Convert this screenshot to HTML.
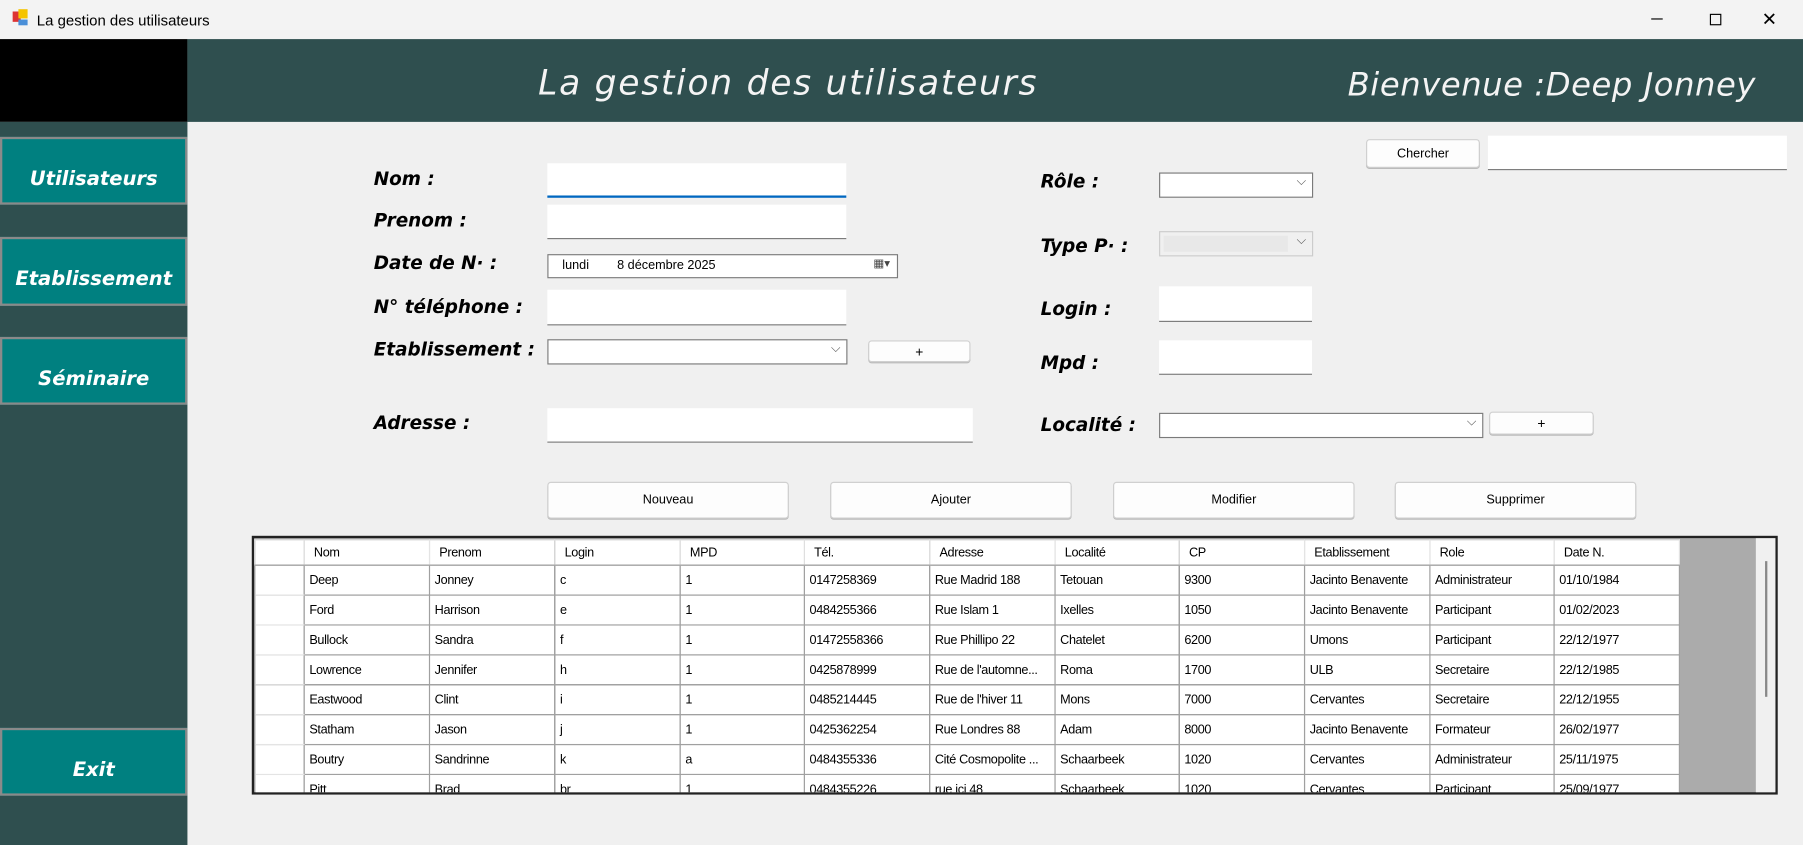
<!DOCTYPE html>
<html><head><meta charset="utf-8">
<style>
html,body{margin:0;padding:0;width:1803px;height:845px;overflow:hidden;background:#f0f0f0}
#w{position:absolute;left:0;top:0;width:1568px;height:735px;transform:scale(1.14987);transform-origin:0 0;font-family:"Liberation Sans",sans-serif;font-size:12px;color:#000;background:#f0f0f0}
.a{position:absolute;box-sizing:border-box}
.cur{font-family:"DejaVu Sans","Liberation Sans",sans-serif;font-style:italic;font-weight:bold}
.lbl{position:absolute;font-family:"DejaVu Sans","Liberation Sans",sans-serif;font-style:italic;font-weight:bold;font-size:16px;color:#000}
.sb{position:absolute;left:0;width:163px;background:#008080;border:2px solid #8a8a8a;color:#fff;font-size:17px;display:flex;align-items:center;justify-content:center;box-sizing:border-box;padding-top:14px}
.tb{position:absolute;background:#fff;border-bottom:1px solid #7a7a7a;box-sizing:border-box}
.cb{position:absolute;background:#fff;border:1px solid #7a7a7a;box-sizing:border-box}
.cb:after{content:"⌵";position:absolute;right:5px;top:1px;font-size:11px;color:#555}
.bt{position:absolute;background:#fdfdfd;border:1px solid #d0d0d0;border-radius:3px;box-sizing:border-box;display:flex;align-items:center;justify-content:center;font-size:12px;box-shadow:0 1px 0 #bbb}
table{border-collapse:collapse;table-layout:fixed}
td{height:26px;padding:0 0 0 4px;border:1px solid #a0a0a0;background:#fff;white-space:nowrap;overflow:hidden;font-size:11px;letter-spacing:-0.3px;box-sizing:border-box}
tr.h td{height:22px;padding-left:8px;border-color:#e4e4e4;border-bottom:1px solid #a0a0a0}
td.r{border-left:none;border-top-color:#e4e4e4;border-bottom-color:#e4e4e4}
</style></head><body><div id="w">
<div class="a" style="left:0;top:0;width:1568px;height:34px;background:#f3f3f3"></div>
<div class="a" style="left:11px;top:10px;width:7px;height:9px;background:#d33"></div>
<div class="a" style="left:16px;top:8px;width:8px;height:8px;background:#f5c400"></div>
<div class="a" style="left:16px;top:17px;width:8px;height:5px;background:#4a8fd8"></div>
<div class="a" style="left:32px;top:10px;font-size:13px">La gestion des utilisateurs</div>
<div class="a" style="left:1436px;top:16px;width:10px;height:1px;background:#000"></div>
<div class="a" style="left:1487px;top:12px;width:10px;height:10px;border:1px solid #000"></div>
<div class="a" style="left:1532px;top:7px;font-size:16px">✕</div>

<div class="a" style="left:0;top:34px;width:163px;height:72px;background:#000"></div>
<div class="a" style="left:0;top:106px;width:163px;height:629px;background:#2f4f4f"></div>
<div class="a" style="left:163px;top:34px;width:1405px;height:72px;background:#2f4f4f"></div>
<div class="a cur" style="left:468px;top:55px;font-size:30px;letter-spacing:1.5px;color:#f4f4f4;font-weight:normal">La gestion des utilisateurs</div>
<div class="a cur" style="left:1172px;top:57px;font-size:28px;letter-spacing:0.5px;color:#f4f4f4;font-weight:normal">Bienvenue :Deep Jonney</div>

<div class="sb cur" style="top:119px;height:59px">Utilisateurs</div>
<div class="sb cur" style="top:206px;height:60px">Etablissement</div>
<div class="sb cur" style="top:293px;height:59px">Séminaire</div>
<div class="sb cur" style="top:633px;height:59px">Exit</div>

<div class="lbl" style="left:325px;top:146px">Nom :</div>
<div class="lbl" style="left:325px;top:182px">Prenom :</div>
<div class="lbl" style="left:325px;top:219px">Date de N· :</div>
<div class="lbl" style="left:325px;top:257px">N° téléphone :</div>
<div class="lbl" style="left:325px;top:294px">Etablissement :</div>
<div class="lbl" style="left:325px;top:358px">Adresse :</div>
<div class="lbl" style="left:905px;top:148px">Rôle :</div>
<div class="lbl" style="left:905px;top:204px">Type P· :</div>
<div class="lbl" style="left:905px;top:259px">Login :</div>
<div class="lbl" style="left:905px;top:306px">Mpd :</div>
<div class="lbl" style="left:905px;top:360px">Localité :</div>

<div class="tb" style="left:476px;top:142px;width:260px;height:30px;border-bottom:2px solid #0067c0"></div>
<div class="tb" style="left:476px;top:178px;width:260px;height:30px"></div>
<div class="a" style="left:476px;top:221px;width:305px;height:21px;background:#fff;border:1px solid #7a7a7a;font-size:11px"><span style="position:absolute;left:12px;top:3px">lundi&nbsp;&nbsp;&nbsp;&nbsp;&nbsp;&nbsp;&nbsp; 8 décembre 2025</span><span style="position:absolute;right:6px;top:2px;font-size:10px;color:#444">▦▾</span></div>
<div class="tb" style="left:476px;top:252px;width:260px;height:31px"></div>
<div class="cb" style="left:476px;top:295px;width:261px;height:22px"></div>
<div class="bt" style="left:755px;top:296px;width:89px;height:19px">+</div>
<div class="tb" style="left:476px;top:355px;width:370px;height:30px"></div>

<div class="cb" style="left:1008px;top:150px;width:134px;height:22px"></div>
<div class="cb" style="left:1008px;top:201px;width:134px;height:22px;background:#f0f0f0;border-color:#ccc"><div class="a" style="left:3px;top:3px;width:108px;height:14px;background:#e8e8e8"></div></div>
<div class="tb" style="left:1008px;top:249px;width:133px;height:31px"></div>
<div class="tb" style="left:1008px;top:296px;width:133px;height:30px"></div>
<div class="cb" style="left:1008px;top:359px;width:282px;height:22px"></div>
<div class="bt" style="left:1295px;top:358px;width:91px;height:20px">+</div>

<div class="bt" style="left:1188px;top:121px;width:99px;height:25px;font-size:11px">Chercher</div>
<div class="tb" style="left:1294px;top:118px;width:260px;height:30px"></div>

<div class="bt" style="left:476px;top:419px;width:210px;height:32px;font-size:11px">Nouveau</div>
<div class="bt" style="left:722px;top:419px;width:210px;height:32px;font-size:11px">Ajouter</div>
<div class="bt" style="left:968px;top:419px;width:210px;height:32px;font-size:11px">Modifier</div>
<div class="bt" style="left:1213px;top:419px;width:210px;height:32px;font-size:11px">Supprimer</div>

<div class="a" style="left:219px;top:466px;width:1327px;height:225px;border:2px solid #222;background:#ababab;overflow:hidden">
<div class="a" style="left:1306px;top:0;width:19px;height:223px;background:#f0f0f0"></div>
<div class="a" style="left:1314px;top:20px;width:2px;height:118px;background:#888"></div>
<table style="width:1239px;position:absolute;left:0;top:1px">
<colgroup><col style="width:43px"><col style="width:109px"><col style="width:109px"><col style="width:109px"><col style="width:108px"><col style="width:109px"><col style="width:109px"><col style="width:108px"><col style="width:109px"><col style="width:109px"><col style="width:108px"><col style="width:109px"></colgroup>
<tr class="h"><td></td><td>Nom</td><td>Prenom</td><td>Login</td><td>MPD</td><td>Tél.</td><td>Adresse</td><td>Localité</td><td>CP</td><td>Etablissement</td><td>Role</td><td>Date N.</td></tr>
<tr><td class="r"></td><td>Deep</td><td>Jonney</td><td>c</td><td>1</td><td>0147258369</td><td>Rue Madrid 188</td><td>Tetouan</td><td>9300</td><td>Jacinto Benavente</td><td>Administrateur</td><td>01/10/1984</td></tr>
<tr><td class="r"></td><td>Ford</td><td>Harrison</td><td>e</td><td>1</td><td>0484255366</td><td>Rue Islam 1</td><td>Ixelles</td><td>1050</td><td>Jacinto Benavente</td><td>Participant</td><td>01/02/2023</td></tr>
<tr><td class="r"></td><td>Bullock</td><td>Sandra</td><td>f</td><td>1</td><td>01472558366</td><td>Rue Phillipo 22</td><td>Chatelet</td><td>6200</td><td>Umons</td><td>Participant</td><td>22/12/1977</td></tr>
<tr><td class="r"></td><td>Lowrence</td><td>Jennifer</td><td>h</td><td>1</td><td>0425878999</td><td>Rue de l'automne...</td><td>Roma</td><td>1700</td><td>ULB</td><td>Secretaire</td><td>22/12/1985</td></tr>
<tr><td class="r"></td><td>Eastwood</td><td>Clint</td><td>i</td><td>1</td><td>0485214445</td><td>Rue de l'hiver 11</td><td>Mons</td><td>7000</td><td>Cervantes</td><td>Secretaire</td><td>22/12/1955</td></tr>
<tr><td class="r"></td><td>Statham</td><td>Jason</td><td>j</td><td>1</td><td>0425362254</td><td>Rue Londres 88</td><td>Adam</td><td>8000</td><td>Jacinto Benavente</td><td>Formateur</td><td>26/02/1977</td></tr>
<tr><td class="r"></td><td>Boutry</td><td>Sandrinne</td><td>k</td><td>a</td><td>0484355336</td><td>Cité Cosmopolite ...</td><td>Schaarbeek</td><td>1020</td><td>Cervantes</td><td>Administrateur</td><td>25/11/1975</td></tr>
<tr><td class="r"></td><td>Pitt</td><td>Brad</td><td>br</td><td>1</td><td>0484355226</td><td>rue ici 48</td><td>Schaarbeek</td><td>1020</td><td>Cervantes</td><td>Participant</td><td>25/09/1977</td></tr>
</table>
</div>
</div></body></html>
